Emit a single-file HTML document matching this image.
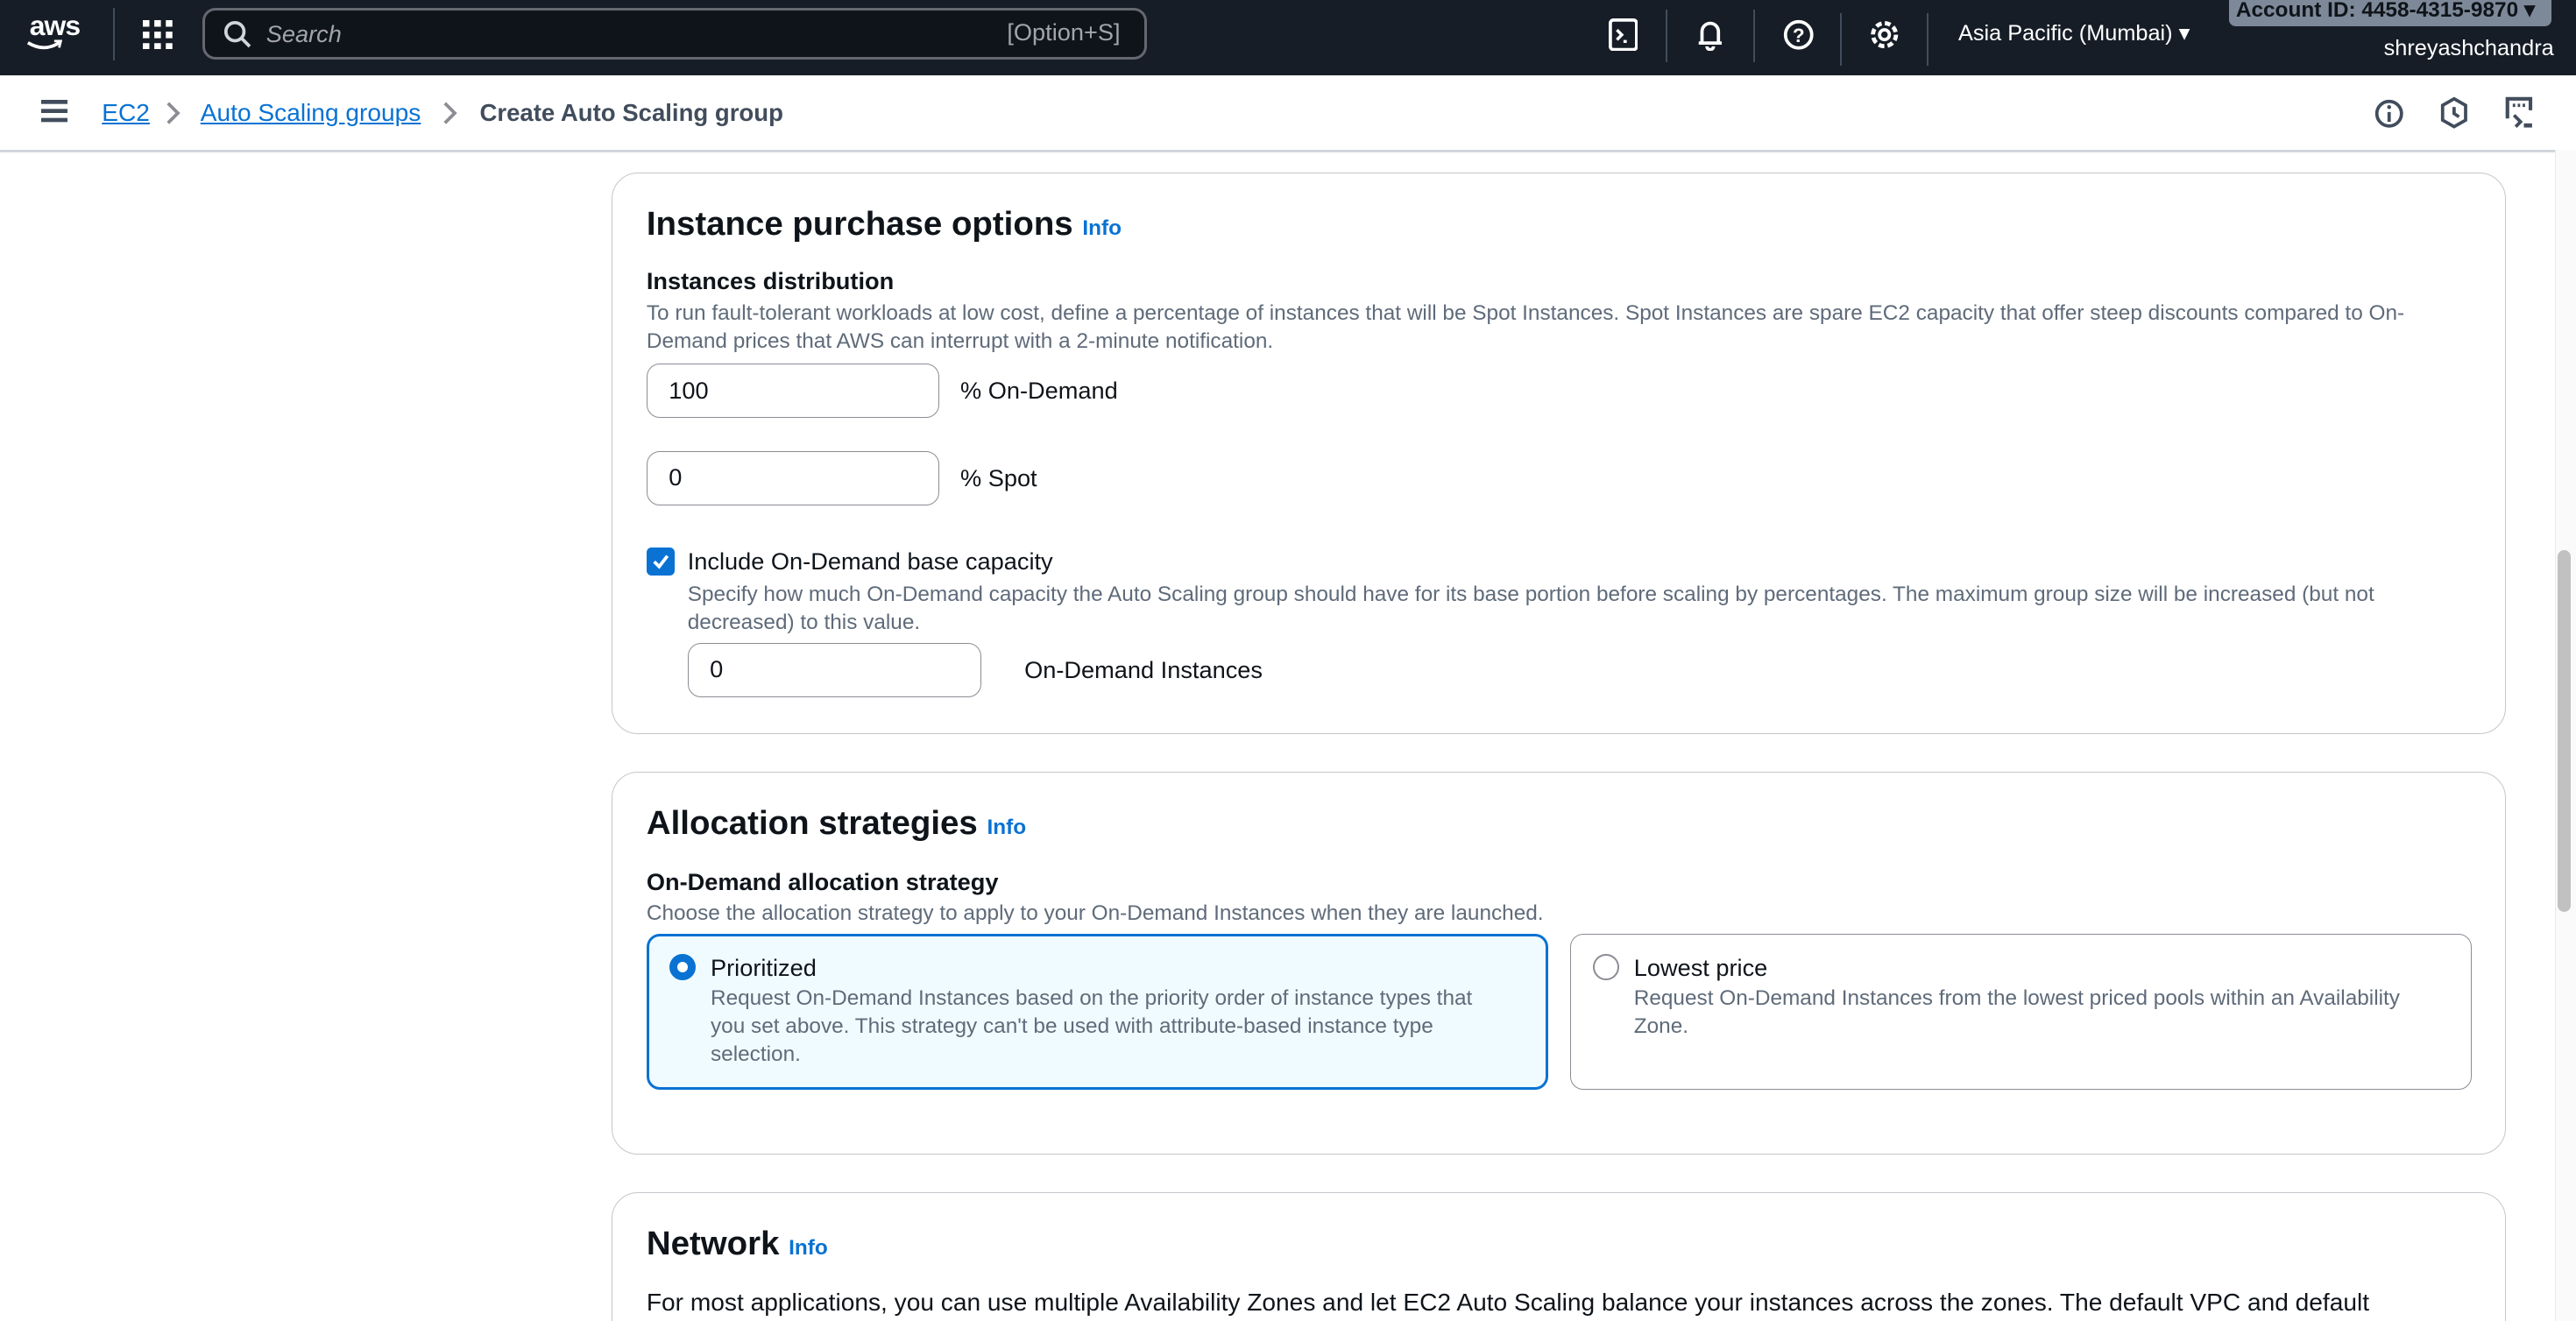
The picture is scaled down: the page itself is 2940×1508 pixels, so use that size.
<!DOCTYPE html>
<html><head><meta charset="utf-8"><style>
html{zoom:1.875;overflow:hidden}
body{margin:0;width:1568px;height:804px;overflow:hidden;background:#fff;font-family:"Liberation Sans",sans-serif;color:#0f141a;position:relative}
.a{position:absolute;white-space:nowrap}
.top{position:absolute;left:0;top:0;width:1568px;height:46px;background:#161d26}
.crumb{position:absolute;left:0;top:46px;width:1568px;height:45px;background:#fff;border-bottom:2px solid #d1d5db}
.panel{position:absolute;left:372px;width:1152px;border:1px solid #c6c6cd;border-radius:16px;background:#fff}
h2{margin:0;font-size:20.5px;font-weight:bold}
.info{color:#0972d3;font-size:13px;font-weight:bold}
.lbl{font-size:14.5px;font-weight:bold}
.desc{font-size:13px;color:#5f6b7a;line-height:17px}
.inp{position:absolute;width:178px;height:33px;border:1px solid #8c8c94;border-radius:8px;box-sizing:border-box;font-size:14.5px;padding:7px 13px}
.t14{font-size:14.5px}
.sep{position:absolute;top:5px;width:1px;height:32px;background:#414d5c}
</style></head><body>
<div class="top">
  <div class="a" style="left:18px;top:6px;color:#fff;font-size:17px;font-weight:bold;letter-spacing:-0.5px">aws</div>
  <svg class="a" style="left:16px;top:24px" width="22" height="8"><path d="M1 2 Q11 8 20 2" stroke="#fff" stroke-width="2" fill="none"/><path d="M17 1 L21 1 L20 5" stroke="#fff" stroke-width="1.5" fill="none"/></svg>
  <div class="sep" style="left:69px"></div>
  <svg class="a" style="left:87px;top:12px" width="18" height="18" fill="#fff"><rect x="0" y="0" width="4" height="4"/><rect x="7" y="0" width="4" height="4"/><rect x="14" y="0" width="4" height="4"/><rect x="0" y="7" width="4" height="4"/><rect x="7" y="7" width="4" height="4"/><rect x="14" y="7" width="4" height="4"/><rect x="0" y="14" width="4" height="4"/><rect x="7" y="14" width="4" height="4"/><rect x="14" y="14" width="4" height="4"/></svg>
  <div class="a" style="left:123px;top:5px;width:575px;height:31px;border:2px solid #656871;border-radius:8px;background:#0f141a;box-sizing:border-box"></div>
  <svg class="a" style="left:136px;top:12px" width="18" height="18"><circle cx="7" cy="7" r="5.5" stroke="#d1d5db" stroke-width="2" fill="none"/><path d="M11 11 L16 16" stroke="#d1d5db" stroke-width="2"/></svg>
  <div class="a" style="left:162px;top:12px;color:#a4a4ad;font-size:14.5px;font-style:italic">Search</div>
  <div class="a" style="left:613px;top:11px;color:#a4a4ad;font-size:14.5px">[Option+S]</div>
  <svg class="a" style="left:979px;top:11px" width="18" height="20"><rect x="1" y="1" width="16" height="18" rx="2" stroke="#fff" stroke-width="2" fill="none"/><path d="M5 7 L8 10 L5 13 M9 14 h2" stroke="#fff" stroke-width="1.8" fill="none"/></svg>
  <div class="sep" style="left:1014px;top:6px"></div>
  <svg class="a" style="left:1032px;top:11px" width="18" height="20"><path d="M4 15 V8 a5 5 0 0 1 10 0 V15 Z M2 15 h14 M7 17 a2 2 0 0 0 4 0" stroke="#fff" stroke-width="2" fill="none"/></svg>
  <div class="sep" style="left:1067px;top:6px"></div>
  <svg class="a" style="left:1085px;top:11px" width="20" height="20"><circle cx="10" cy="10" r="8" stroke="#fff" stroke-width="2" fill="none"/><text x="10" y="14.5" text-anchor="middle" fill="#fff" font-size="12" font-weight="bold" font-family="Liberation Sans">?</text></svg>
  <div class="sep" style="left:1120px;top:8px"></div>
  <svg class="a" style="left:1137px;top:10px" width="20" height="22"><circle cx="10" cy="11" r="3" stroke="#fff" stroke-width="2" fill="none"/><circle cx="10" cy="11" r="7" stroke="#fff" stroke-width="2.5" stroke-dasharray="3.5 2" fill="none"/></svg>
  <div class="sep" style="left:1173px;top:8px"></div>
  <div class="a" style="left:1192px;top:12px;color:#fff;font-size:13.5px">Asia Pacific (Mumbai) ▾</div>
  <div class="a" style="left:1357px;top:-4px;width:196px;height:20px;background:#7d8998;border-radius:4px"></div>
  <div class="a" style="left:1361px;top:-2px;color:#0f141a;font-size:13px;font-weight:bold">Account ID: 4458-4315-9870 ▾</div>
  <div class="a" style="left:1451px;top:22px;color:#fff;font-size:13.5px">shreyashchandra</div>
</div>
<div class="crumb">
  <svg class="a" style="left:25px;top:15px" width="16" height="14" fill="#414d5c"><rect y="0" width="16" height="2.5"/><rect y="5.5" width="16" height="2.5"/><rect y="11" width="16" height="2.5"/></svg>
  <div class="a" style="left:62px;top:14px;font-size:15px;color:#0972d3;text-decoration:underline">EC2</div>
  <svg class="a" style="left:100px;top:16px" width="10" height="14"><path d="M2 1 L8 7 L2 13" stroke="#8c8c94" stroke-width="2" fill="none"/></svg>
  <div class="a" style="left:122px;top:14px;font-size:15px;color:#0972d3;text-decoration:underline">Auto Scaling groups</div>
  <svg class="a" style="left:269px;top:16px" width="10" height="14"><path d="M2 1 L8 7 L2 13" stroke="#8c8c94" stroke-width="2" fill="none"/></svg>
  <div class="a" style="left:292px;top:14px;font-size:14.7px;color:#414d5c;font-weight:bold">Create Auto Scaling group</div>
  <svg class="a" style="left:1444px;top:13px" width="20" height="20"><circle cx="10" cy="10" r="7.5" stroke="#414d5c" stroke-width="2" fill="none"/><path d="M10 9 V15" stroke="#414d5c" stroke-width="2"/><circle cx="10" cy="6" r="1.2" fill="#414d5c"/></svg>
  <svg class="a" style="left:1485px;top:12px" width="18" height="22"><path d="M9 2 L16 6 V15 L9 19 L2 15 V6 Z" stroke="#414d5c" stroke-width="2" fill="none"/><path d="M9 7 V11 L12 13" stroke="#414d5c" stroke-width="2" fill="none"/></svg>
  <svg class="a" style="left:1524px;top:12px" width="20" height="22"><path d="M2 14 V2 H16 V9" stroke="#414d5c" stroke-width="2.2" fill="none"/><path d="M6 5 v2 M9 5 v2 M12 5 v2" stroke="#414d5c" stroke-width="1.5"/><path d="M6 12 L10 16 L7 19" stroke="#414d5c" stroke-width="2" fill="none"/><rect x="12" y="17" width="5" height="2.5" fill="#414d5c"/></svg>
</div>
<div class="a" style="left:1555px;top:91px;width:13px;height:713px;background:#fafafa;border-left:1px solid #e9ebed"></div>
<div class="a" style="left:1557px;top:335px;width:8px;height:220px;background:#c1c1c1;border-radius:4px"></div>

<div class="panel" style="top:105px;height:341px">
  <div class="a" style="left:21px;top:19px"><h2>Instance purchase options <span class="info">Info</span></h2></div>
  <div class="a lbl" style="left:21px;top:57px">Instances distribution</div>
  <div class="a desc" style="left:21px;top:77px">To run fault-tolerant workloads at low cost, define a percentage of instances that will be Spot Instances. Spot Instances are spare EC2 capacity that offer steep discounts compared to On-<br>Demand prices that AWS can interrupt with a 2-minute notification.</div>
  <div class="inp" style="left:21px;top:116px">100</div>
  <div class="a t14" style="left:212px;top:124px">% On-Demand</div>
  <div class="inp" style="left:21px;top:169px">0</div>
  <div class="a t14" style="left:212px;top:177px">% Spot</div>
  <div class="a" style="left:21px;top:228px;width:17px;height:17px;background:#0972d3;border-radius:3px"></div>
  <svg class="a" style="left:23px;top:230px" width="13" height="13"><path d="M2.5 6.5 L5.5 9.5 L10.5 3" stroke="#fff" stroke-width="2" fill="none"/></svg>
  <div class="a t14" style="left:46px;top:228px">Include On-Demand base capacity</div>
  <div class="a desc" style="left:46px;top:248px">Specify how much On-Demand capacity the Auto Scaling group should have for its base portion before scaling by percentages. The maximum group size will be increased (but not<br>decreased) to this value.</div>
  <div class="inp" style="left:46px;top:286px;width:179px">0</div>
  <div class="a t14" style="left:251px;top:294px">On-Demand Instances</div>
</div>

<div class="panel" style="top:470px;height:232px">
  <div class="a" style="left:21px;top:19px"><h2>Allocation strategies <span class="info">Info</span></h2></div>
  <div class="a lbl" style="left:21px;top:58px">On-Demand allocation strategy</div>
  <div class="a desc" style="left:21px;top:77px">Choose the allocation strategy to apply to your On-Demand Instances when they are launched.</div>
  <div class="a" style="left:21px;top:98px;width:549px;height:95px;border:2px solid #0972d3;border-radius:8px;background:#f0fbff;box-sizing:border-box"></div>
  <div class="a" style="left:35px;top:110px;width:16px;height:16px;border-radius:50%;border:5px solid #0972d3;box-sizing:border-box;background:#fff"></div>
  <div class="a t14" style="left:60px;top:110px">Prioritized</div>
  <div class="a desc" style="left:60px;top:129px">Request On-Demand Instances based on the priority order of instance types that<br>you set above. This strategy can't be used with attribute-based instance type<br>selection.</div>
  <div class="a" style="left:583px;top:98px;width:549px;height:95px;border:1px solid #8c8c94;border-radius:8px;box-sizing:border-box"></div>
  <div class="a" style="left:597px;top:110px;width:16px;height:16px;border-radius:50%;border:1.5px solid #8c8c94;box-sizing:border-box"></div>
  <div class="a t14" style="left:622px;top:110px">Lowest price</div>
  <div class="a desc" style="left:622px;top:129px">Request On-Demand Instances from the lowest priced pools within an Availability<br>Zone.</div>
</div>

<div class="panel" style="top:726px;height:100px">
  <div class="a" style="left:21px;top:19px"><h2>Network <span class="info">Info</span></h2></div>
  <div class="a t14" style="left:21px;top:58px;font-size:15px">For most applications, you can use multiple Availability Zones and let EC2 Auto Scaling balance your instances across the zones. The default VPC and default</div>
</div>
</body></html>
